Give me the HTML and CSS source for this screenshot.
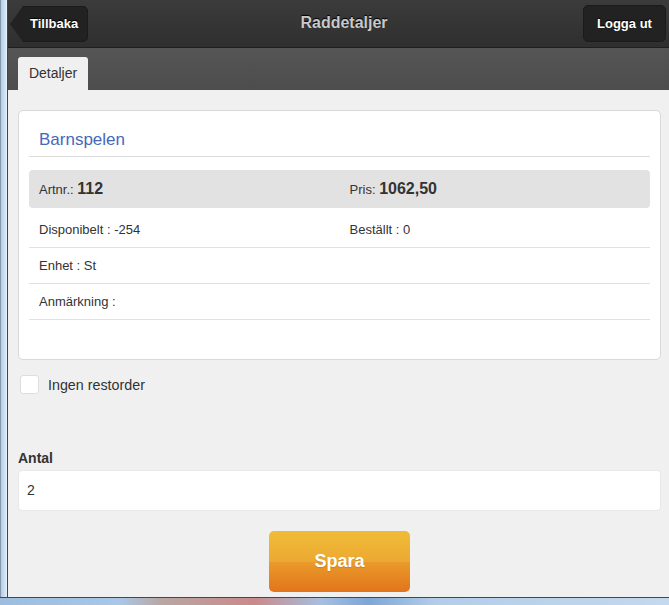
FILE: index.html
```html
<!DOCTYPE html>
<html lang="sv">
<head>
<meta charset="utf-8">
<title>Raddetaljer</title>
<link rel="stylesheet" href="styles.css">
</head>
<body>
<div class="window">
  <div class="main">
    <div class="frame-left"></div>
    <div class="viewport">
      <header class="header">
        <a class="hbtn back">Tillbaka</a>
        <h1 class="title">Raddetaljer</h1>
        <a class="hbtn logout">Logga ut</a>
      </header>
      <nav class="navbar">
        <div class="tab">Detaljer</div>
      </nav>
      <main class="content">
        <section class="card">
          <h2 class="card-title">Barnspelen</h2>
          <div class="row row-hl">
            <div class="cell">Artnr.: <b>112</b></div>
            <div class="cell">Pris: <b>1062,50</b></div>
          </div>
          <div class="row row-tall">
            <div class="cell">Disponibelt : -254</div>
            <div class="cell">Beställt : 0</div>
          </div>
          <div class="row">
            <div class="cell">Enhet : St</div>
          </div>
          <div class="row">
            <div class="cell">Anmärkning :</div>
          </div>
        </section>
        <label class="check"><span class="box"></span>Ingen restorder</label>
        <div class="field">
          <div class="field-label">Antal</div>
          <div class="input">2</div>
        </div>
        <div class="actions">
          <button class="btn-save">Spara</button>
        </div>
      </main>
    </div>
  </div>
  <div class="frame-bottom"></div>
</div>
</body>
</html>
```

FILE: styles.css
```css
* { box-sizing: border-box; }
html, body { margin: 0; padding: 0; }
body {
  font-family: "Liberation Sans", Arial, sans-serif;
  color: #333;
  background: #f0f0f0;
}
.window {
  width: 669px;
  height: 605px;
  overflow: hidden;
  display: flex;
  flex-direction: column;
}
.main {
  display: flex;
  height: 597px;
  flex: none;
}
.frame-left {
  width: 8px;
  flex: none;
  border-left: 1px solid #8598ae;
  border-right: 1px solid #3d4654;
  background: linear-gradient(to right, #b6cde6, #d3e3f3 70%, #e9f1f9);
}
.viewport {
  width: 663px;
  flex: none;
  background: #f0f0f0;
  display: flex;
  flex-direction: column;
}
.header {
  height: 48px;
  background: linear-gradient(#3b3b3b, #2f2f2f);
  border-bottom: 1px solid #1f1f1f;
  display: flex;
  align-items: flex-start;
  justify-content: space-between;
  padding: 5px 5px 0 2px;
}
.hbtn {
  display: block;
  height: 37px;
  line-height: 35px;
  font-size: 13px;
  font-weight: bold;
  color: #fff;
  text-shadow: 0 -1px 1px #000;
  background: #222;
  border: 1px solid #1b1b1b;
  border-radius: 5px;
}
.back {
  margin-top: 1px;
  height: 36px;
  line-height: 34px;
  width: 78px;
  padding-left: 19px;
  border-radius: 0 5px 5px 0;
  clip-path: polygon(0 50%, 13px 0, 100% 0, 100% 100%, 13px 100%);
}
.logout {
  width: 83px;
  text-align: center;
}
.title {
  margin: 0;
  flex: 1;
  text-align: center;
  padding-left: 17px;
  font-size: 16px;
  font-weight: bold;
  line-height: 36px;
  color: #c9c9c9;
  text-shadow: 0 -1px 1px #000;
}
.navbar {
  height: 42px;
  background: linear-gradient(#555, #4d4d4d);
  display: flex;
  align-items: flex-end;
  padding-left: 10px;
}
.tab {
  height: 33px;
  width: 70px;
  background: #f0f0f0;
  border-radius: 3px 3px 0 0;
  font-size: 14px;
  line-height: 33px;
  text-align: center;
  color: #333;
}
.content {
  padding: 20px 10px 0;
  display: flex;
  flex-direction: column;
}
.card {
  background: #fff;
  border: 1px solid #d9d9d9;
  border-radius: 5px;
  padding: 10px 10px 39px;
}
.card-title {
  margin: 0 0 13px;
  padding: 9px 10px 6px;
  font-size: 17px;
  line-height: 20px;
  font-weight: normal;
  color: #4668bb;
  border-bottom: 1px solid #dcdcdc;
}
.row {
  display: flex;
  align-items: center;
  height: 36px;
  border-bottom: 1px solid #e1e1e1;
  font-size: 13px;
}
.row-hl {
  height: 38px;
  background: #e2e2e2;
  border-bottom: none;
  border-radius: 4px;
}
.row-tall {
  height: 40px;
  padding-top: 3px;
}
.cell {
  flex: 1;
  padding: 0 10px;
}
.cell b {
  font-size: 16px;
}
.check {
  display: flex;
  align-items: center;
  margin-top: 15px;
  padding-left: 2px;
  font-size: 14.3px;
  color: #333;
}
.box {
  width: 19px;
  height: 19px;
  background: #fff;
  border: 1px solid #dedede;
  border-radius: 3px;
  margin-right: 9px;
}
.field {
  margin-top: 55px;
}
.field-label {
  font-size: 14px;
  font-weight: bold;
  line-height: 18px;
  margin-bottom: 3px;
}
.input {
  height: 41px;
  background: #fff;
  border: 1px solid #e8e8e8;
  border-radius: 4px;
  padding-left: 8px;
  font-size: 14px;
  line-height: 39px;
  color: #333;
}
.actions {
  display: flex;
  justify-content: center;
  margin-top: 20px;
}
.btn-save {
  width: 141px;
  height: 61px;
  border: none;
  border-radius: 5px;
  background: linear-gradient(#f0bc37, #eca932 50%, #ea9b2b 50%, #e3741b);
  color: #fff;
  font-family: "Liberation Sans", Arial, sans-serif;
  font-size: 18px;
  font-weight: bold;
  text-shadow: 0 1px 1px rgba(150, 80, 0, 0.3);
}
.frame-bottom {
  flex: 1;
  border-top: 1px solid #474747;
  background: linear-gradient(to right, #9dbde0 0%, #a9c7e6 18%, #b9a7a4 24%, #c98a8a 38%, #a6bfe0 48%, #7ea6d4 55%, #b3cde9 65%, #c4d8ee 100%);
}
```
